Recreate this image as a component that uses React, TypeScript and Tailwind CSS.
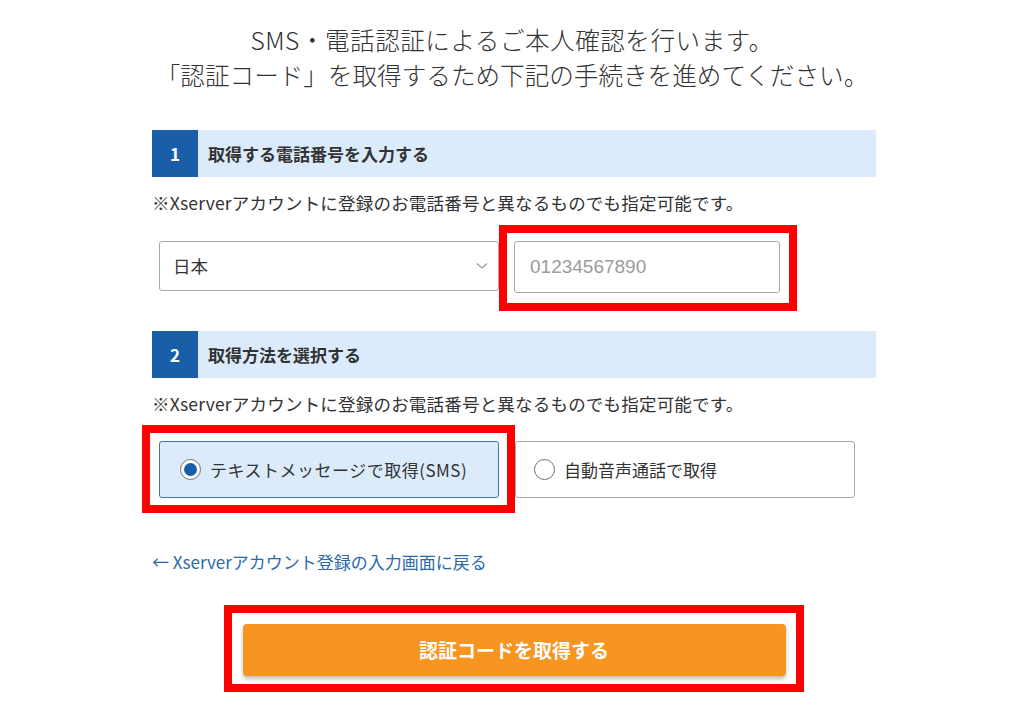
import React from "react";

function SectionHeading({ num, label }: { num: string; label: string }) {
  return (
    <div className="flex h-[47px] bg-[#dcebfb]">
      <div className="w-[46px] h-full bg-[#1a5ea8] flex items-center justify-center text-white font-bold text-[17px]">
        {num}
      </div>
      <div className="flex items-center pl-[10px] font-bold text-[17px] text-[#333]">{label}</div>
    </div>
  );
}

function RedFrame({ className }: { className: string }) {
  return <div className={"absolute border-[8px] border-[#ff0000] pointer-events-none " + className} />;
}

export default function App() {
  return (
    <div className="w-[1024px] h-[718px] bg-white overflow-hidden text-[#333] font-['Noto_Sans_CJK_JP','Noto_Sans',sans-serif]">
      <div className="pt-[22px] text-center text-[24.6px] leading-[35px] font-light">
        <p className="tracking-[0.5px]">SMS・電話認証によるご本人確認を行います。</p>
        <p>「認証コード」を取得するため下記の手続きを進めてください。</p>
      </div>

      <div className="ml-[152px] w-[724px] mt-[38px]">
        <SectionHeading num="1" label="取得する電話番号を入力する" />
        <p className="mt-[12px] text-[17.5px] leading-[27px] tracking-[0.2px]">
          ※Xserverアカウントに登録のお電話番号と異なるものでも指定可能です。
        </p>

        <div className="ml-[7px] w-[696px] mt-[25px] grid grid-cols-2 gap-[16px] items-start">
          <div className="h-[50px] border border-[#a9a9a9] rounded-[3px] flex items-center justify-between pl-[13px] pr-[10px] text-[17.5px]">
            <span>日本</span>
            <svg width="12" height="8" viewBox="0 0 12 8" fill="none">
              <path d="M1 1.5 L6 6 L11 1.5" stroke="#9a9a9a" strokeWidth="1.2" />
            </svg>
          </div>
          <div className="relative w-[266px] -ml-[1px]">
            <div className="h-[52px] border border-[#a9a9a9] rounded-[3px] flex items-center pl-[15px] text-[19px] text-[#9b9b9b] font-['Liberation_Sans',sans-serif]">
              01234567890
            </div>
            <RedFrame className="-left-[15px] -right-[17px] -top-[16px] -bottom-[18px]" />
          </div>
        </div>

        <div className="mt-[38px]">
          <SectionHeading num="2" label="取得方法を選択する" />
        </div>
        <p className="mt-[12px] text-[17.5px] leading-[27px] tracking-[0.2px]">
          ※Xserverアカウントに登録のお電話番号と異なるものでも指定可能です。
        </p>

        <div className="ml-[7px] w-[696px] mt-[24px] grid grid-cols-2 gap-[16px]">
          <div className="relative">
            <div className="h-[57px] border border-[#3f75ab] bg-[#dcebfb] rounded-[3px] flex items-center pl-[20px] text-[17px]">
              <span className="w-[21px] h-[21px] rounded-full border border-[#6f6f6f] bg-white flex items-center justify-center">
                <span className="w-[13px] h-[13px] rounded-full bg-[#1a5ea8]" />
              </span>
              <span className="ml-[9px] tracking-[0.5px]">テキストメッセージで取得(SMS)</span>
            </div>
            <RedFrame className="-left-[17px] -right-[16px] -top-[16px] -bottom-[15px]" />
          </div>
          <div className="h-[57px] border border-[#a9a9a9] rounded-[3px] flex items-center pl-[18px] text-[17px]">
            <span className="w-[21px] h-[21px] rounded-full border border-[#6f6f6f] bg-white" />
            <span className="ml-[9px]">自動音声通話で取得</span>
          </div>
        </div>

        <p className="mt-[50px] text-[17px] leading-[27px] text-[#2c6aa8]">
          ← Xserverアカウント登録の入力画面に戻る
        </p>

        <div className="relative w-[543px] mx-auto mt-[49px]">
          <div className="h-[52px] bg-[#f79520] rounded-[4px] shadow-[0_3px_4px_rgba(0,0,0,0.25)] flex items-center justify-center text-white font-bold text-[19px]">
            認証コードを取得する
          </div>
          <RedFrame className="-left-[19px] -right-[18px] -top-[19px] -bottom-[16px]" />
        </div>
      </div>
    </div>
  );
}
